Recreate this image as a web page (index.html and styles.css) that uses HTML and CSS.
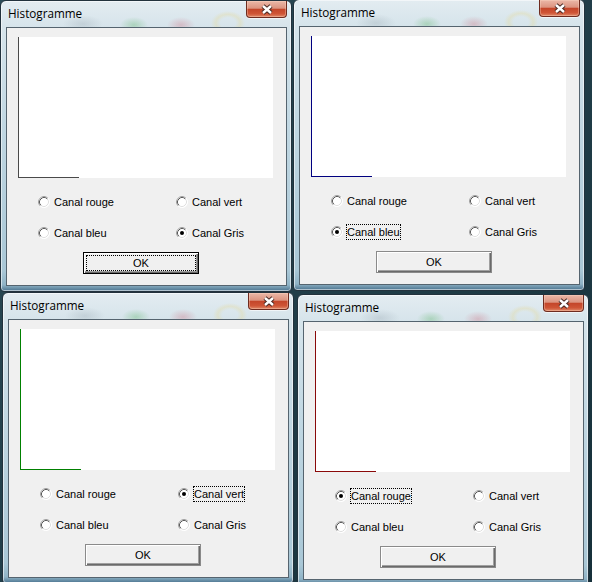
FILE: index.html
```html
<!DOCTYPE html>
<html lang="fr">
<head>
    <meta charset="UTF-8">
    <meta name="viewport" content="width=device-width, initial-scale=1.0">
    <title>Histogramme</title>
    <link rel="stylesheet" href="styles.css">
</head>
<body>
<div class="desktop">
    <svg class="defs" width="0" height="0">
        <symbol id="radio" viewBox="0 0 12 12">
            <circle cx="6" cy="6" r="5.5" fill="#fff" stroke="#fff"/>
            <path d="M2.11 9.89A5.5 5.5 0 0 1 9.89 2.11" fill="none" stroke="#a0a0a0"/>
            <path d="M9.18 2.82A4.5 4.5 0 0 1 2.82 9.18" fill="none" stroke="#e0e0e0"/>
            <path d="M2.82 9.18A4.5 4.5 0 0 1 9.18 2.82" fill="none" stroke="#5a5a5a"/>
        </symbol>
        <symbol id="radio-on" viewBox="0 0 12 12">
            <use href="#radio"/>
            <circle cx="6" cy="6" r="2" fill="#000"/>
        </symbol>
        <symbol id="close-x" viewBox="0 0 14 11">
            <path d="M3 2L11 9M11 2L3 9" stroke="#4a2a24" stroke-width="4.4" fill="none"/>
            <path d="M3 2L11 9M11 2L3 9" stroke="#fff" stroke-width="2.4" fill="none"/>
        </symbol>
    </svg>

    <!-- Canal Gris -->
    <div class="window win-1">
        <div class="titlebar">
            <span class="title">Histogramme</span>
            <div class="close"><svg width="14" height="11"><use href="#close-x"/></svg></div>
        </div>
        <div class="panel">
            <div class="plot plot-gris"><div class="axis-x"></div></div>
            <div class="channels">
                <label class="channel"><svg class="radio"><use href="#radio"/></svg><span>Canal rouge</span></label>
                <label class="channel"><svg class="radio"><use href="#radio"/></svg><span>Canal vert</span></label>
                <label class="channel"><svg class="radio"><use href="#radio"/></svg><span>Canal bleu</span></label>
                <label class="channel"><svg class="radio"><use href="#radio-on"/></svg><span>Canal Gris</span></label>
            </div>
            <button class="ok is-default"><span>OK</span></button>
        </div>
    </div>

    <!-- Canal bleu -->
    <div class="window win-2">
        <div class="titlebar">
            <span class="title">Histogramme</span>
            <div class="close"><svg width="14" height="11"><use href="#close-x"/></svg></div>
        </div>
        <div class="panel">
            <div class="plot plot-bleu"><div class="axis-x"></div></div>
            <div class="channels">
                <label class="channel"><svg class="radio"><use href="#radio"/></svg><span>Canal rouge</span></label>
                <label class="channel"><svg class="radio"><use href="#radio"/></svg><span>Canal vert</span></label>
                <label class="channel"><svg class="radio"><use href="#radio-on"/></svg><span class="focus">Canal bleu</span></label>
                <label class="channel"><svg class="radio"><use href="#radio"/></svg><span>Canal Gris</span></label>
            </div>
            <button class="ok"><span>OK</span></button>
        </div>
    </div>

    <!-- Canal vert -->
    <div class="window win-3">
        <div class="titlebar">
            <span class="title">Histogramme</span>
            <div class="close"><svg width="14" height="11"><use href="#close-x"/></svg></div>
        </div>
        <div class="panel">
            <div class="plot plot-vert"><div class="axis-x"></div></div>
            <div class="channels">
                <label class="channel"><svg class="radio"><use href="#radio"/></svg><span>Canal rouge</span></label>
                <label class="channel"><svg class="radio"><use href="#radio-on"/></svg><span class="focus">Canal vert</span></label>
                <label class="channel"><svg class="radio"><use href="#radio"/></svg><span>Canal bleu</span></label>
                <label class="channel"><svg class="radio"><use href="#radio"/></svg><span>Canal Gris</span></label>
            </div>
            <button class="ok"><span>OK</span></button>
        </div>
    </div>

    <!-- Canal rouge -->
    <div class="window win-4">
        <div class="titlebar">
            <span class="title">Histogramme</span>
            <div class="close"><svg width="14" height="11"><use href="#close-x"/></svg></div>
        </div>
        <div class="panel">
            <div class="plot plot-rouge"><div class="axis-x"></div></div>
            <div class="channels">
                <label class="channel"><svg class="radio"><use href="#radio-on"/></svg><span class="focus">Canal rouge</span></label>
                <label class="channel"><svg class="radio"><use href="#radio"/></svg><span>Canal vert</span></label>
                <label class="channel"><svg class="radio"><use href="#radio"/></svg><span>Canal bleu</span></label>
                <label class="channel"><svg class="radio"><use href="#radio"/></svg><span>Canal Gris</span></label>
            </div>
            <button class="ok"><span>OK</span></button>
        </div>
    </div>
</div>
</body>
</html>
```

FILE: styles.css
```css
body {
    margin: 0;
    background: #1f3844;
    font-family: "Liberation Sans", Arial, sans-serif;
    font-size: 11px;
    color: #000;
}
.desktop {
    position: relative;
    width: 592px;
    height: 582px;
    overflow: hidden;
    background: linear-gradient(135deg, #2c4c58, #16303a);
}
.defs {
    display: block;
    overflow: hidden;
}

/* windows on the desktop */
.window {
    position: absolute;
    width: 292px;
    height: 292px;
    box-sizing: border-box;
    display: flex;
    flex-direction: column;
    padding: 0 4px 5px 5px;
    border: 1px solid #22323d;
    border-radius: 6px 6px 4px 4px;
    background: linear-gradient(180deg, #e3ecf1 0, #d6e4eb 26px, #c2d8e3 120px, #a9c7d6 270px, #8fb3c6 284px, #3e6784 291px);
    box-shadow: inset 0 0 0 1px rgba(255, 255, 255, 0.55);
}
.win-1 { left: 0; top: 0; }
.win-2 { left: 293px; top: -1px; }
.win-3 { left: 2px; top: 292px; }
.win-4 { left: 297px; top: 294px; }

.titlebar {
    height: 26px;
    display: flex;
    align-items: flex-start;
    background:
        radial-gradient(ellipse 20px 9px at 77px 23px, rgba(120, 135, 145, 0.22), transparent),
        radial-gradient(ellipse 14px 8px at 128px 24px, rgba(70, 170, 80, 0.3), transparent),
        radial-gradient(ellipse 14px 8px at 175px 24px, rgba(200, 70, 90, 0.26), transparent),
        radial-gradient(ellipse 17px 12px at 222px 22px, transparent 45%, rgba(230, 215, 140, 0.3) 72%, transparent);
}
.title {
    margin: 4px 0 0 2px;
    font-family: "Open Sans", "Liberation Sans", sans-serif;
    font-size: 11.7px;
    line-height: 16px;
}
.close {
    margin-left: auto;
    width: 41px;
    height: 17px;
    box-sizing: border-box;
    display: flex;
    align-items: center;
    justify-content: center;
    border: 1px solid #6e2b1f;
    border-top: none;
    border-radius: 0 0 4px 4px;
    background: linear-gradient(180deg, #ebb8a8 0, #dc9480 45%, #c4462a 52%, #cf5536 80%, #e08a6a 100%);
    box-shadow: inset 0 0 0 1px rgba(255, 220, 200, 0.35), 0 1px 0 rgba(255, 255, 255, 0.6);
}

/* client area */
.panel {
    flex: 1;
    display: flex;
    flex-direction: column;
    align-items: flex-start;
    padding-top: 9px;
    border: 1px solid #55646f;
    background: #f0f0f0;
}
.plot {
    width: 255px;
    height: 141px;
    box-sizing: border-box;
    margin-left: 11px;
    display: flex;
    align-items: flex-end;
    background: #fff;
    border-left: 1px solid #4a4a4a;
}
.axis-x {
    width: 60px;
    height: 1px;
    background: #4a4a4a;
}
.plot-bleu { border-color: #000080; }
.plot-bleu .axis-x { background: #000080; }
.plot-vert { border-color: #008000; }
.plot-vert .axis-x { background: #008000; }
.plot-rouge { border-color: #8a0a0a; }
.plot-rouge .axis-x { background: #8a0a0a; }

.channels {
    margin-top: 15px;
    padding-left: 31px;
    display: grid;
    grid-template-columns: 138px 138px;
    grid-auto-rows: 17px;
    row-gap: 14px;
}
.channel {
    display: flex;
    align-items: center;
}
.radio {
    width: 12px;
    height: 12px;
    margin-right: 3px;
}
.channel span {
    padding: 1px;
    line-height: 14px;
}
.channel .focus {
    outline: 1px dotted #000;
    outline-offset: -1px;
}

.ok {
    margin: 11px 0 0 76px;
    width: 116px;
    height: 22px;
    box-sizing: border-box;
    display: flex;
    padding: 2px;
    border: 1px solid #8a8a8a;
    background: #f0f0f0;
    box-shadow: inset 1px 1px #fff, inset -1px -1px #6a6a6a, inset -2px -2px #a0a0a0;
    font-family: "Liberation Sans", Arial, sans-serif;
    font-size: 11px;
    color: #000;
}
.ok span {
    flex: 1;
    display: flex;
    align-items: center;
    justify-content: center;
    border: 1px dotted transparent;
}
.ok.is-default {
    border-color: #000;
}
.ok.is-default span {
    border-color: #000;
}
```
